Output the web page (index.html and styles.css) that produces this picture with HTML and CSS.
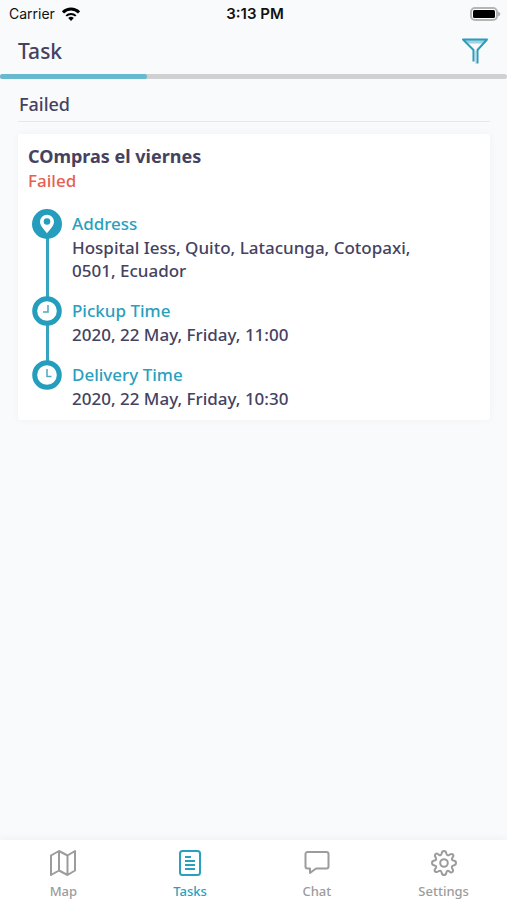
FILE: index.html
```html
<!DOCTYPE html>
<html lang="en">
<head>
<meta charset="utf-8">
<meta name="viewport" content="width=device-width, initial-scale=1">
<title>Task</title>
<link rel="stylesheet" href="styles.css">
</head>
<body>
<div class="status-bar">
  <div class="carrier">
    <span>Carrier</span>
    <svg width="18" height="14" viewBox="0 0 18 14" aria-hidden="true">
      <g fill="none" stroke="#000" stroke-width="3">
        <path d="M1 5.4a11.4 11.4 0 0 1 16 0"/>
        <path d="M4.2 8.9a6.9 6.9 0 0 1 9.6 0" stroke-width="2"/>
      </g>
      <path d="M9 14l-2.8-3a4 4 0 0 1 5.6 0z"/>
    </svg>
  </div>
  <time class="clock">3:13 PM</time>
  <svg class="battery" width="31" height="14" viewBox="0 0 31 14" aria-hidden="true">
    <rect x="1" y="1" width="26" height="12" rx="4" fill="#fff" stroke="#b4b5b6" stroke-width="2"/>
    <rect x="3" y="3" width="22" height="8" rx="1.5"/>
    <path d="M28 4.500q2.500 1 2.500 2.500t-2.500 2.500z" fill="#b4b5b6"/>
  </svg>
</div>
<header class="header">
  <h1>Task</h1>
  <button class="filter" type="button" aria-label="Filter">
    <svg width="28" height="28" viewBox="0 0 28 28" aria-hidden="true">
      <path d="M2 2h24l-4 4.500h-16z" fill="#9fd3e1"/>
      <path d="M12.500 24.500V13L2 2.500h24L16.500 13v13.500" fill="none" stroke="#2b9cba" stroke-width="2" stroke-linejoin="round"/>
      <path d="M15 14v12.500" stroke="#8ccadb" stroke-width="1"/>
    </svg>
  </button>
</header>
<div class="progress" role="progressbar" aria-label="Tasks" aria-valuenow="29"><div class="progress-value"></div></div>
<main class="content">
  <h2 class="section-title">Failed</h2>
  <article class="card">
    <h3>COmpras el viernes</h3>
    <p class="state">Failed</p>
    <ol class="steps">
      <li class="step">
        <svg width="30" height="30" viewBox="0 0 30 30" aria-hidden="true">
          <circle cx="15" cy="15" r="15" fill="#259dbd"/>
          <path d="M15 24.500c-1.500-2.700-7-7-7-11.700a7 7 0 0 1 14 0c0 4.700-5.500 9-7 11.700z" fill="#fff"/>
          <circle cx="15" cy="12.500" r="3.300" fill="#259dbd"/>
        </svg>
        <div><h4>Address</h4><p>Hospital Iess, Quito, Latacunga, Cotopaxi, 0501, Ecuador</p></div>
      </li>
      <li class="step">
        <svg width="30" height="30" viewBox="0 0 30 30" aria-hidden="true">
          <circle cx="15" cy="15" r="12.300" fill="#fff" stroke="#259dbd" stroke-width="5"/>
          <path d="M16 9v7h-5" fill="none" stroke="#48a9c4" stroke-width="1.500"/>
        </svg>
        <div><h4>Pickup Time</h4><p>2020, 22 May, Friday, 11:00</p></div>
      </li>
      <li class="step">
        <svg width="30" height="30" viewBox="0 0 30 30" aria-hidden="true">
          <circle cx="15" cy="15" r="12.300" fill="#fff" stroke="#259dbd" stroke-width="5"/>
          <path d="M15 9v7.500h4.500" fill="none" stroke="#48a9c4" stroke-width="1.500"/>
        </svg>
        <div><h4>Delivery Time</h4><p>2020, 22 May, Friday, 10:30</p></div>
      </li>
    </ol>
  </article>
</main>
<nav class="tabs">
  <a href="#map">
    <svg width="28" height="28" viewBox="0 0 28 28" aria-hidden="true"><path d="M2 6.500l8-4.500 8.500 4.500L26 2v19.500L18.500 26 10 21.500 2 26zM10 2v19.500M18.500 6.500V26"/></svg>
    <span>Map</span>
  </a>
  <a href="#tasks" class="active" aria-current="page">
    <svg width="28" height="28" viewBox="0 0 28 28" aria-hidden="true"><rect x="4" y="2" width="20" height="24" rx="2.500"/><path d="M9 8h6M9 12h10M9 16h10M9 20h10"/></svg>
    <span>Tasks</span>
  </a>
  <a href="#chat">
    <svg width="28" height="28" viewBox="0 0 28 28" aria-hidden="true"><path d="M4.500 3h19A2 2 0 0 1 25.500 5v12.500a2 2 0 0 1-2 2H13L7 24v-4.500H4.500a2 2 0 0 1-2-2V5a2 2 0 0 1 2-2z"/></svg>
    <span>Chat</span>
  </a>
  <a href="#settings">
    <svg width="28" height="28" viewBox="0 0 28 28" aria-hidden="true"><path d="M11.600 4.500Q12 2 14 2t2.400 2.500q.7 2.500 3 1.300 2.200-1.600 3.500-.3t-.7 3.400q-1.200 2.200 1.300 2.700 2.500.4 2.500 2.400t-2.500 2.400q-2.500.7-1.300 3 1.600 2.200.3 3.500t-3.400-.7q-2.200-1.200-2.700 1.300-.4 2.500-2.400 2.500t-2.400-2.500q-.7-2.500-3-1.300-2.200 1.600-3.500.3t.7-3.400q1.200-2.200-1.300-2.700Q2 16 2 14t2.500-2.400q2.500-.7 1.300-3-1.600-2.200-.3-3.500t3.400.7q2.200 1.200 2.700-1.300z"/><circle cx="14" cy="14" r="3.800"/></svg>
    <span>Settings</span>
  </a>
</nav>
</body>
</html>
```
FILE: styles.css
```css
* { box-sizing: border-box; }
body {
  margin: 0;
  min-height: 100vh;
  display: flex;
  flex-direction: column;
  background: #f8fafc;
  color: #45425f;
  font-family: "Noto Sans", "Open Sans", sans-serif;
  font-size: 17px;
  font-weight: 500;
}
h1, h2, h3, h4, p, ol { margin: 0; padding: 0; }
svg { display: block; flex: none; }

.status-bar {
  display: grid;
  grid-template-columns: 1fr auto 1fr;
  align-items: center;
  height: 27px;
  padding: 0 6px 0 9px;
  color: #111;
  font-family: Inter, sans-serif;
  font-size: 14px;
}
.carrier { display: flex; align-items: center; gap: 7px; font-weight: 400; }
.clock { font-size: 15px; font-weight: 600; }
.battery { justify-self: end; }

.header {
  display: flex;
  align-items: center;
  justify-content: space-between;
  height: 47px;
  padding: 0 18px;
}
h1 { font-size: 21px; line-height: 28px; font-weight: 500; }
.filter { padding: 0; border: 0; background: none; }

.progress { height: 5px; border-radius: 3px; background: #cfd0d2; }
.progress-value { width: 29%; height: 5px; border-radius: 3px; background: #66b9ce; }

.content { flex: 1; padding: 12px 17px 12px 18px; }
.section-title {
  margin: 0 0 12px;
  padding: 0 1px 4px;
  border-bottom: 1px solid #e6e8eb;
  font-size: 18px;
  line-height: 26px;
  font-weight: 500;
}
.card {
  padding: 9px 10px 10px;
  border-radius: 3px;
  background: #fff;
  box-shadow: 0 0 8px rgba(0, 0, 0, 0.04);
}
h3 { font-size: 18px; line-height: 26px; font-weight: 700; }
.state { color: #e65f54; line-height: 23px; }

.steps { list-style: none; padding: 17px 4px 0; }
.step { position: relative; display: flex; gap: 10px; padding-bottom: 14px; }
.step:last-child { padding-bottom: 0; }
.step:not(:last-child)::before {
  content: "";
  position: absolute;
  top: 15px;
  bottom: -15px;
  left: 14px;
  width: 3px;
  background: #37a5c2;
}
.step svg { position: relative; z-index: 1; }
.step div { padding-top: 3px; line-height: 23px; max-width: 350px; }
h4 { color: #2a9fbe; font-size: 17px; line-height: 24px; font-weight: 500; }

.tabs {
  display: grid;
  grid-template-columns: repeat(4, 1fr);
  height: 60px;
  background: #fff;
  box-shadow: 0 0 10px rgba(0, 0, 0, 0.06);
}
.tabs a {
  display: flex;
  flex-direction: column;
  align-items: center;
  gap: 5px;
  padding-top: 9px;
  color: #9c9c9c;
  font-size: 13px;
  line-height: 18px;
  text-decoration: none;
}
.tabs .active { color: #2a9fbe; }
.tabs svg { fill: none; stroke: currentColor; stroke-width: 2; stroke-linejoin: round; }
```
